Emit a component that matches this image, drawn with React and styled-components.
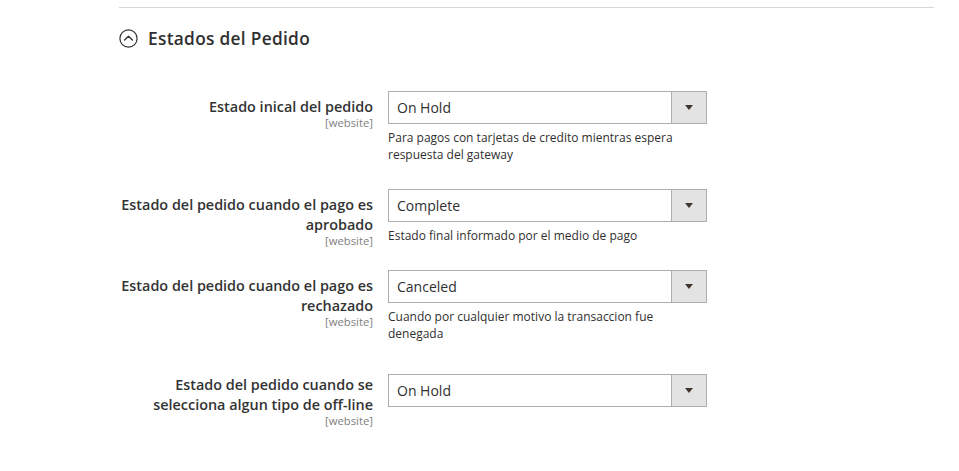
import React from 'react'
import styled, { createGlobalStyle } from 'styled-components'

const GlobalStyle = createGlobalStyle`
  body {
    margin: 0;
    background: #fff;
    font-family: "Open Sans", "Noto Sans", sans-serif;
    color: #303030;
  }
`

const Page = styled.div`
  width: 959px;
  height: 471px;
  box-sizing: border-box;
  padding: 7px 25px 0 117px;
  overflow: hidden;
`

const Rule = styled.div`
  margin-left: 2px;
  border-top: 1px solid #d6d6d6;
`

const SectionHeader = styled.div`
  margin: 18px 0 0 2px;
  height: 24px;
  display: flex;
  align-items: center;
  gap: 10px;
  h2 {
    margin: 0;
    font-size: 17.3px;
    font-weight: 600;
    color: #303030;
    letter-spacing: 0.3px;
  }
`

const Form = styled.div`
  margin-top: 41px;
  display: flex;
  flex-direction: column;
`

const Row = styled.div`
  display: grid;
  grid-template-columns: 256px 319px;
  column-gap: 15px;
  align-items: start;
  margin-bottom: ${p => p.$gap}px;
`

const LabelCell = styled.div`
  padding-top: ${p => p.$top}px;
  text-align: right;
`

const Label = styled.div`
  font-size: 14.4px;
  font-weight: 600;
  line-height: 20px;
  color: #333;
`

const Scope = styled.div`
  font-size: 11.3px;
  line-height: 12px;
  color: #808080;
`

const Select = styled.div`
  height: 33px;
  box-sizing: border-box;
  border: 1px solid #adadad;
  background: #fff;
  display: flex;
  align-items: center;
  span {
    flex: 1;
    padding-left: 8px;
    font-size: 14px;
    color: #303030;
  }
`

const ArrowBox = styled.div`
  width: 34px;
  height: 100%;
  border-left: 1px solid #adadad;
  background: #e3e3e3;
  display: flex;
  align-items: center;
  justify-content: center;
  &::after {
    content: "";
    border-left: 4px solid transparent;
    border-right: 4px solid transparent;
    border-top: 5px solid #41362f;
  }
`

const Note = styled.div`
  margin-top: 5px;
  max-width: 300px;
  font-size: 12px;
  line-height: 17px;
  color: #303030;
`

const CollapseIcon = () => (
  <svg width="19" height="19" viewBox="0 0 19 19">
    <circle cx="9.5" cy="9.5" r="8.6" fill="none" stroke="#303030" strokeWidth="1.2" />
    <polyline points="5.6,11 9.5,7.2 13.4,11" fill="none" stroke="#303030" strokeWidth="1.3" strokeLinecap="round" strokeLinejoin="round" />
  </svg>
)

const fields = [
  {
    label: 'Estado inical del pedido',
    value: 'On Hold',
    note: 'Para pagos con tarjetas de credito mientras espera respuesta del gateway',
    gap: 26,
    top: 6,
  },
  {
    label: 'Estado del pedido cuando el pago es aprobado',
    value: 'Complete',
    note: 'Estado final informado por el medio de pago',
    gap: 23,
    top: 6,
  },
  {
    label: 'Estado del pedido cuando el pago es rechazado',
    value: 'Canceled',
    note: 'Cuando por cualquier motivo la transaccion fue denegada',
    gap: 32,
    top: 6,
  },
  {
    label: 'Estado del pedido cuando se selecciona algun tipo de off-line',
    value: 'On Hold',
    gap: 0,
    top: 1,
  },
]

const App = () => {
  return (
    <Page>
      <GlobalStyle />
      <Rule />
      <SectionHeader>
        <CollapseIcon />
        <h2>Estados del Pedido</h2>
      </SectionHeader>
      <Form>
        {fields.map((f, i) => (
          <Row key={i} $gap={f.gap}>
            <LabelCell $top={f.top}>
              <Label>{f.label}</Label>
              <Scope>[website]</Scope>
            </LabelCell>
            <div>
              <Select>
                <span>{f.value}</span>
                <ArrowBox />
              </Select>
              {f.note && <Note>{f.note}</Note>}
            </div>
          </Row>
        ))}
      </Form>
    </Page>
  )
}

export default App
